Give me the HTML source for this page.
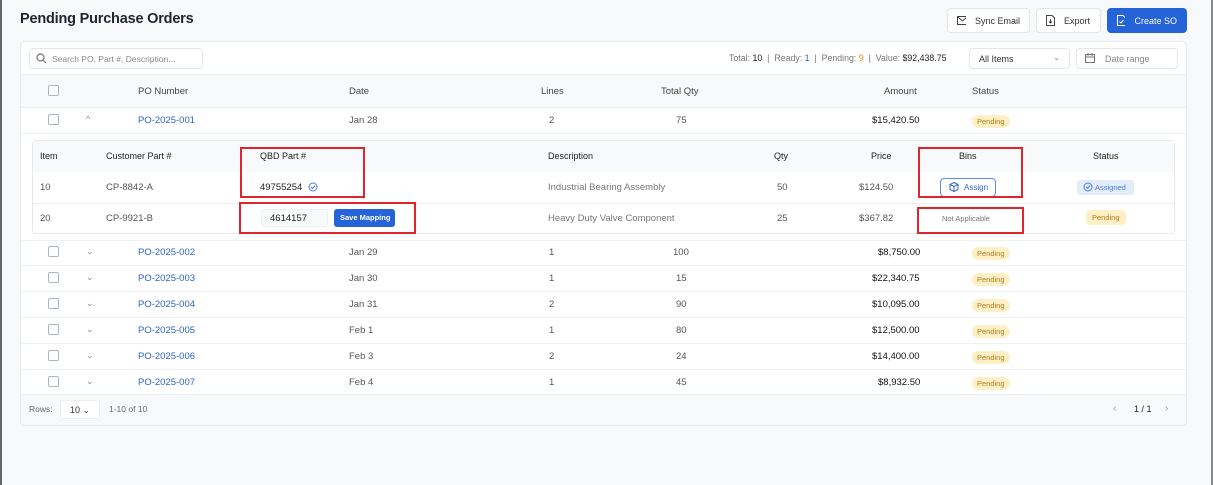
<!DOCTYPE html>
<html><head><meta charset="utf-8"><style>
*{box-sizing:border-box;margin:0;padding:0}
body{width:1213px;height:485px;overflow:hidden;background:#f8f9fb;font-family:"Liberation Sans",sans-serif;font-size:10px;color:#333;position:relative}
.a{position:absolute;white-space:nowrap}
.h1{left:20px;top:11px;font-size:14.5px;font-weight:bold;color:#1f2430;letter-spacing:-0.2px}
.btn{position:absolute;top:8px;height:25px;border:1px solid #e3e6ea;border-radius:4px;background:#fff;font-size:9px;color:#333;display:flex;align-items:center;gap:9px;padding:0 9px;white-space:nowrap}
.card{position:absolute;left:20px;top:41px;width:1167px;height:385px;background:#fff;border:1px solid #e6e9ed;border-radius:5px}
.line{position:absolute;left:21px;width:1165px;height:1px;background:#edf0f2}
.cb{position:absolute;left:48px;width:11px;height:11px;border:1px solid #aab4c6;border-radius:2px;background:#fff}
.chev{position:absolute;left:86px;font-size:9px;color:#888}
.po{position:absolute;left:138px;color:#2d64c8;font-size:9.5px}
.g{color:#555;font-size:9.5px}
.pend{position:absolute;background:#fdf0c6;color:#b57a1a;font-size:7.5px;border-radius:7px;padding:2px 5px}
.red{position:absolute;border:2px solid #e0252d}
</style></head><body>
<div class="a" style="left:0;top:0;width:2px;height:485px;background:#666"></div>
<div class="a" style="right:0;top:0;width:2px;height:485px;background:#888"></div>
<div class="a h1">Pending Purchase Orders</div>
<div class="btn" style="left:947px;width:83px"><svg width="11" height="9"><rect x=".5" y=".5" width="10" height="8" fill="none" stroke="#444"/><path d="M1 1l4.5 4 4.5-4" fill="none" stroke="#444"/></svg>Sync Email</div>
<div class="btn" style="left:1036px;width:65px"><svg width="9" height="11"><path d="M.5.5h5.5l2.5 2.5v7.5h-8z" fill="none" stroke="#444"/><path d="M4.5 4v4M3 6.5l1.5 1.5 1.5-1.5" fill="none" stroke="#444"/></svg>Export</div>
<div class="btn" style="left:1107px;width:80px;background:#2563d8;border-color:#2563d8;color:#fff"><svg width="9" height="11"><path d="M.5.5h5.5l2.5 2.5v7.5h-8z" fill="none" stroke="#fff"/><path d="M2.5 6.5l1.5 1.5 2.5-3" fill="none" stroke="#fff"/></svg>Create SO</div>
<div class="card"></div>
<div class="a" style="left:29px;top:48px;width:174px;height:21px;border:1px solid #e3e6ea;border-radius:4px;padding:5px 0 0 22px;color:#888;font-size:8.5px">Search PO, Part #, Description...</div>
<svg class="a" style="left:36px;top:53px" width="11" height="11"><circle cx="4.5" cy="4.5" r="3.5" fill="none" stroke="#777" stroke-width="1.2"/><path d="M7 7l3 3" stroke="#777" stroke-width="1.2"/></svg>
<div class="a" style="left:729px;top:53px;font-size:8.8px;color:#777">Total: <span style="color:#222">10</span> &nbsp;|&nbsp; Ready: <span style="color:#2d64c8">1</span> &nbsp;|&nbsp; Pending: <span style="color:#d98a1d">9</span> &nbsp;|&nbsp; Value: <span style="color:#222">$92,438.75</span></div>
<div class="a" style="left:969px;top:48px;width:101px;height:21px;border:1px solid #e3e6ea;border-radius:4px;padding:5px 0 0 9px;font-size:9px;color:#333">All Items<span style="position:absolute;right:9px;top:4px;color:#888;font-size:8px">⌄</span></div>
<div class="a" style="left:1076px;top:48px;width:102px;height:21px;border:1px solid #e3e6ea;border-radius:4px;padding:5px 0 0 28px;font-size:9px;color:#888">Date range</div>
<svg class="a" style="left:1085px;top:53px" width="10" height="10"><rect x=".5" y="1.5" width="9" height="8" fill="none" stroke="#777"/><path d="M.5 4h9M3 0v3M7 0v3" stroke="#777"/></svg>
<div class="a" style="left:21px;top:74px;width:1165px;height:34px;background:#f8f9fb;border-top:1px solid #edf0f2;border-bottom:1px solid #edf0f2"></div>
<div class="cb" style="top:85px"></div>
<div class="a g" style="left:138px;top:86px;color:#444">PO Number</div>
<div class="a g" style="left:349px;top:86px;color:#444">Date</div>
<div class="a g" style="left:541px;top:86px;color:#444">Lines</div>
<div class="a g" style="left:661px;top:86px;color:#444">Total Qty</div>
<div class="a g" style="left:884px;top:86px;color:#444">Amount</div>
<div class="a g" style="left:972px;top:86px;color:#444">Status</div>
<div class="cb" style="top:114px"></div><div class="chev" style="top:114px">^</div>
<div class="po" style="top:115px">PO-2025-001</div>
<div class="a g" style="left:349px;top:115px">Jan 28</div>
<div class="a g" style="left:549px;top:115px">2</div>
<div class="a g" style="left:676px;top:115px">75</div>
<div class="a" style="left:872px;top:115px;font-size:9.5px;color:#111">$15,420.50</div>
<div class="pend" style="left:972px;top:115px">Pending</div>
<div class="line" style="top:133px"></div>
<div class="a" style="left:32px;top:140px;width:1143px;height:94px;border:1px solid #e6e9ed;border-radius:4px;background:#fff"></div>
<div class="a" style="left:33px;top:141px;width:1141px;height:31px;background:#f8f9fb"></div>
<div class="a" style="left:33px;top:203px;width:1141px;height:1px;background:#edf0f2"></div>
<div class="a" style="left:40px;top:151px;font-size:9px;color:#222">Item</div>
<div class="a" style="left:106px;top:151px;font-size:9px;color:#222">Customer Part #</div>
<div class="a" style="left:260px;top:151px;font-size:9px;color:#222">QBD Part #</div>
<div class="a" style="left:548px;top:151px;font-size:9px;color:#222">Description</div>
<div class="a" style="left:774px;top:151px;font-size:9px;color:#222">Qty</div>
<div class="a" style="left:871px;top:151px;font-size:9px;color:#222">Price</div>
<div class="a" style="left:959px;top:151px;font-size:9px;color:#222">Bins</div>
<div class="a" style="left:1093px;top:151px;font-size:9px;color:#222">Status</div>
<div class="a g" style="left:40px;top:182px">10</div>
<div class="a g" style="left:106px;top:182px">CP-8842-A</div>
<div class="a" style="left:260px;top:182px;font-size:9.5px;color:#222">49755254</div>
<svg class="a" style="left:308px;top:182px" width="10" height="10"><circle cx="5" cy="5" r="4" fill="none" stroke="#4a7fe0"/><path d="M3 5l1.5 1.5 2.5-3" fill="none" stroke="#4a7fe0"/></svg>
<div class="a g" style="left:548px;top:182px;color:#777">Industrial Bearing Assembly</div>
<div class="a g" style="left:777px;top:182px">50</div>
<div class="a g" style="left:859px;top:182px">$124.50</div>
<div class="a" style="left:940px;top:178px;width:56px;height:19px;border:1px solid #5f8ee6;border-radius:4px;color:#2d64c8;font-size:8px;padding:4px 0 0 23px">Assign</div>
<svg class="a" style="left:949px;top:182px" width="10" height="10"><path d="M5 .5l4 2v5l-4 2-4-2v-5z M1 2.5l4 2 4-2M5 4.5v5" fill="none" stroke="#2d64c8"/></svg>
<div class="a" style="left:1077px;top:180px;width:57px;height:15px;background:#e3ecfb;border-radius:3px;color:#4a7fe0;font-size:7.5px;padding:3px 0 0 18px">Assigned</div>
<svg class="a" style="left:1083px;top:182px" width="10" height="10"><circle cx="5" cy="5" r="4" fill="none" stroke="#4a7fe0"/><path d="M3 5l1.5 1.5 2.5-3" fill="none" stroke="#4a7fe0"/></svg>
<div class="a g" style="left:40px;top:213px">20</div>
<div class="a g" style="left:106px;top:213px">CP-9921-B</div>
<div class="a" style="left:261px;top:209px;width:67px;height:18px;background:#f8f9fb;border:1px solid #eceff2;border-radius:3px;padding:3px 0 0 8px;font-size:9.5px;color:#222">4614157</div>
<div class="a" style="left:334px;top:209px;width:61px;height:18px;background:#2563d8;border-radius:3px;color:#fff;font-size:7.5px;font-weight:bold;padding:4px 0 0 6px">Save Mapping</div>
<div class="a g" style="left:548px;top:213px;color:#777">Heavy Duty Valve Component</div>
<div class="a g" style="left:777px;top:213px">25</div>
<div class="a g" style="left:859px;top:213px">$367.82</div>
<div class="a" style="left:942px;top:214px;font-size:7.5px;color:#777">Not Applicable</div>
<div class="pend" style="left:1086px;top:210px;padding:3px 6px;border-radius:4px">Pending</div>
<div class="red" style="left:240px;top:147px;width:125px;height:51px"></div>
<div class="red" style="left:239px;top:202px;width:177px;height:32px"></div>
<div class="red" style="left:918px;top:147px;width:105px;height:51px"></div>
<div class="red" style="left:917px;top:207px;width:107px;height:27px"></div>
<div class="line" style="top:240px"></div>
<div class="cb" style="top:246px"></div><div class="chev" style="top:246px">⌄</div><div class="po" style="top:247px">PO-2025-002</div><div class="a g" style="left:349px;top:247px">Jan 29</div><div class="a g" style="left:549px;top:247px">1</div><div class="a g" style="left:673px;top:247px">100</div><div class="a" style="left:878px;top:247px;font-size:9.5px;color:#111">$8,750.00</div><div class="pend" style="left:972px;top:247px">Pending</div>
<div class="line" style="top:265px"></div>
<div class="cb" style="top:272px"></div><div class="chev" style="top:272px">⌄</div><div class="po" style="top:273px">PO-2025-003</div><div class="a g" style="left:349px;top:273px">Jan 30</div><div class="a g" style="left:549px;top:273px">1</div><div class="a g" style="left:676px;top:273px">15</div><div class="a" style="left:872px;top:273px;font-size:9.5px;color:#111">$22,340.75</div><div class="pend" style="left:972px;top:273px">Pending</div>
<div class="line" style="top:291px"></div>
<div class="cb" style="top:298px"></div><div class="chev" style="top:298px">⌄</div><div class="po" style="top:299px">PO-2025-004</div><div class="a g" style="left:349px;top:299px">Jan 31</div><div class="a g" style="left:549px;top:299px">2</div><div class="a g" style="left:676px;top:299px">90</div><div class="a" style="left:872px;top:299px;font-size:9.5px;color:#111">$10,095.00</div><div class="pend" style="left:972px;top:299px">Pending</div>
<div class="line" style="top:317px"></div>
<div class="cb" style="top:324px"></div><div class="chev" style="top:324px">⌄</div><div class="po" style="top:325px">PO-2025-005</div><div class="a g" style="left:349px;top:325px">Feb 1</div><div class="a g" style="left:549px;top:325px">1</div><div class="a g" style="left:676px;top:325px">80</div><div class="a" style="left:872px;top:325px;font-size:9.5px;color:#111">$12,500.00</div><div class="pend" style="left:972px;top:325px">Pending</div>
<div class="line" style="top:343px"></div>
<div class="cb" style="top:350px"></div><div class="chev" style="top:350px">⌄</div><div class="po" style="top:351px">PO-2025-006</div><div class="a g" style="left:349px;top:351px">Feb 3</div><div class="a g" style="left:549px;top:351px">2</div><div class="a g" style="left:676px;top:351px">24</div><div class="a" style="left:872px;top:351px;font-size:9.5px;color:#111">$14,400.00</div><div class="pend" style="left:972px;top:351px">Pending</div>
<div class="line" style="top:369px"></div>
<div class="cb" style="top:376px"></div><div class="chev" style="top:376px">⌄</div><div class="po" style="top:377px">PO-2025-007</div><div class="a g" style="left:349px;top:377px">Feb 4</div><div class="a g" style="left:549px;top:377px">1</div><div class="a g" style="left:676px;top:377px">45</div><div class="a" style="left:878px;top:377px;font-size:9.5px;color:#111">$8,932.50</div><div class="pend" style="left:972px;top:377px">Pending</div>
<div class="a" style="left:21px;top:394px;width:1165px;height:31px;background:#f8f9fb;border-top:1px solid #edf0f2;border-radius:0 0 5px 5px"></div>
<div class="a" style="left:29px;top:404px;font-size:8.5px;color:#666">Rows:</div>
<div class="a" style="left:60px;top:400px;width:40px;height:19px;background:#fff;border:1px solid #eceff2;border-radius:3px;padding:4px 0 0 9px;font-size:9px;color:#333">10 ⌄</div>
<div class="a" style="left:109px;top:404px;font-size:8.5px;color:#666">1-10 of 10</div>
<div class="a" style="left:1113px;top:403px;font-size:10px;color:#999">‹</div>
<div class="a" style="left:1134px;top:404px;font-size:9px;color:#222">1 / 1</div>
<div class="a" style="left:1165px;top:403px;font-size:10px;color:#999">›</div>
</body></html>
